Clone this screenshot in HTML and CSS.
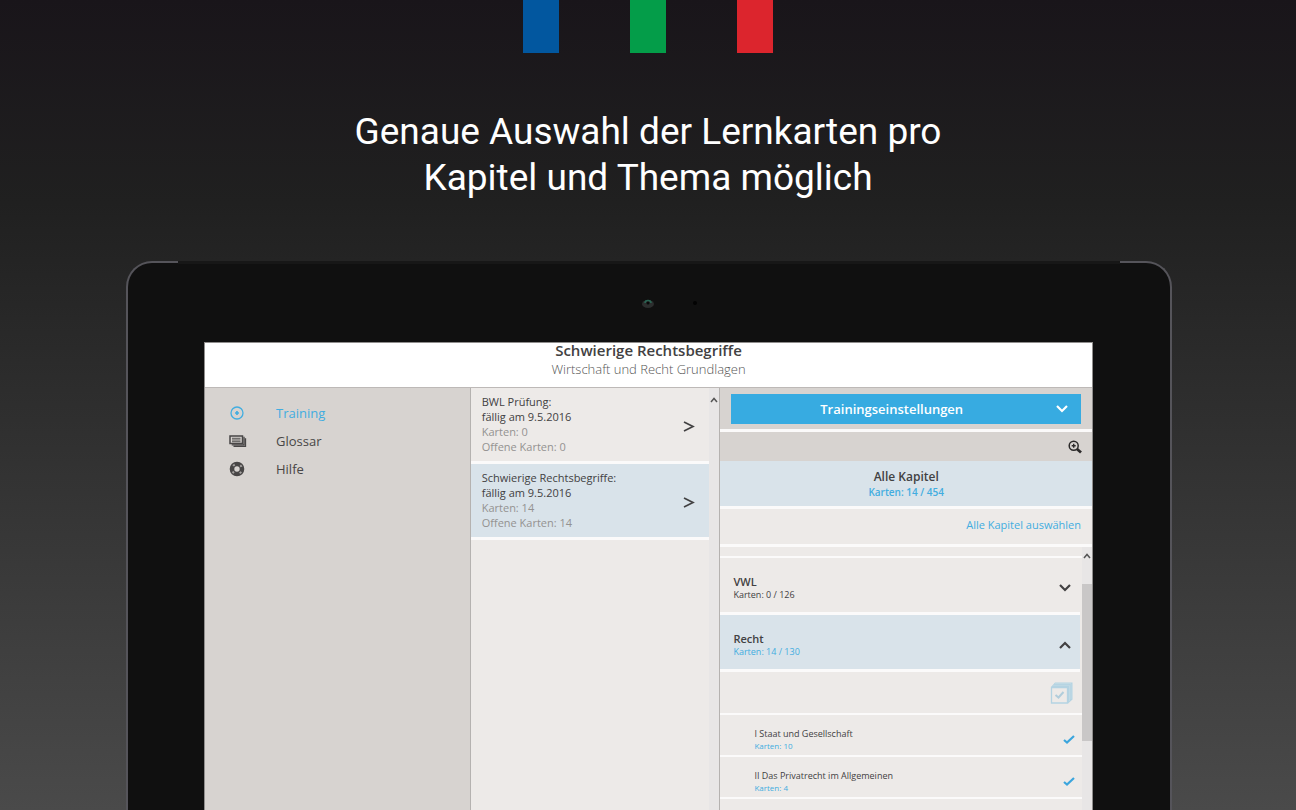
FILE: index.html
```
<!DOCTYPE html>
<html lang="de">
<head>
    <meta charset="UTF-8">
    <meta name="viewport" content="width=device-width, initial-scale=1.0">
    <title>Lernkarten</title>
    <link rel="stylesheet" href="styles.css">
</head>
<body>
    <div class="ribbons">
        <span class="ribbon blue"></span>
        <span class="ribbon green"></span>
        <span class="ribbon red"></span>
    </div>

    <h1>Genaue Auswahl der Lernkarten pro<br>Kapitel und Thema möglich</h1>

    <div class="tablet">
        <div class="bezel">
            <svg class="camera" width="60" height="12" viewBox="0 0 60 12">
                <ellipse cx="7" cy="6" rx="6" ry="4" fill="#2c2e2e"/>
                <path d="M4 5a3 2.500 0 0 1 6 0" fill="none" stroke="#2a6453" stroke-width="1.500"/>
                <circle cx="7" cy="5" r="1.500" fill="#090909"/>
                <circle cx="54" cy="5" r="2" fill="#030303"/>
            </svg>
        </div>

        <div class="screen">
            <header class="app-header">
                <h2>Schwierige Rechtsbegriffe</h2>
                <p>Wirtschaft und Recht Grundlagen</p>
            </header>

            <div class="columns">
                <nav class="sidebar">
                    <a href="#" class="nav-item active">
                        <svg width="18" height="16" viewBox="0 0 18 16"><circle cx="8" cy="8" r="6" fill="none" stroke="currentColor" stroke-width="1.300"/><path d="M8 6v4M6 8h4" stroke="currentColor" stroke-width="1.700"/></svg>
                        Training
                    </a>
                    <a href="#" class="nav-item">
                        <svg width="18" height="16" viewBox="0 0 18 16"><path d="M4.500 13.300h12v-8M2.700 11.800h12.300v-8" fill="none" stroke="currentColor" stroke-width="1.300"/><path d="M1 3h12.500v7.500H1z" fill="none" stroke="currentColor" stroke-width="1.500"/><path d="M3 5.300h8.500M3 7h8.500M3 8.700h8.500" stroke="currentColor" stroke-width=".9"/></svg>
                        Glossar
                    </a>
                    <a href="#" class="nav-item">
                        <svg width="18" height="16" viewBox="0 0 18 16"><circle cx="8" cy="8" r="5" fill="none" stroke="currentColor" stroke-width="4.600"/><circle cx="8" cy="8" r="5" fill="none" stroke="#a5a2a0" stroke-width="2" stroke-dasharray="2 5.854" stroke-dashoffset="-2.900"/></svg>
                        Hilfe
                    </a>
                </nav>

                <div class="trainings">
                    <div class="training-list">
                        <a href="#" class="training">
                            <div>
                                <p>BWL Prüfung:</p>
                                <p>fällig am 9.5.2016</p>
                                <p class="muted">Karten: 0</p>
                                <p class="muted">Offene Karten: 0</p>
                            </div>
                            <svg width="12" height="16" viewBox="0 0 12 16"><path d="M1 6l9 4.500L1 15" fill="none" stroke="currentColor" stroke-width="1.700"/></svg>
                        </a>
                        <a href="#" class="training selected">
                            <div>
                                <p>Schwierige Rechtsbegriffe:</p>
                                <p>fällig am 9.5.2016</p>
                                <p class="muted">Karten: 14</p>
                                <p class="muted">Offene Karten: 14</p>
                            </div>
                            <svg width="12" height="16" viewBox="0 0 12 16"><path d="M1 6l9 4.500L1 15" fill="none" stroke="currentColor" stroke-width="1.700"/></svg>
                        </a>
                    </div>
                    <div class="scrollbar">
                        <svg width="8" height="6" viewBox="0 0 8 6"><path d="M1 5l3-3.500L7 5" fill="none" stroke="currentColor" stroke-width="1.500"/></svg>
                    </div>
                </div>

                <main class="panel">
                    <div class="settings">
                        <button class="settings-btn">
                            <span>Trainingseinstellungen</span>
                            <svg width="14" height="10" viewBox="0 0 14 10"><path d="M2 2l5 5 5-5" fill="none" stroke="currentColor" stroke-width="2.200"/></svg>
                        </button>
                    </div>
                    <div class="search">
                        <button class="search-btn" aria-label="Suchen">
                            <svg width="14" height="14" viewBox="0 0 14 14"><circle cx="5.700" cy="5.700" r="4.500" fill="none" stroke="currentColor" stroke-width="1.500"/><path d="M5.700 3.700v4M3.700 5.700h4" stroke="currentColor" stroke-width="1.400"/><path d="M9 9l4 3.500" stroke="currentColor" stroke-width="2.800"/></svg>
                        </button>
                    </div>
                    <div class="all-chapters">
                        <h3>Alle Kapitel</h3>
                        <p>Karten: 14 / 454</p>
                    </div>
                    <div class="select-all"><a href="#">Alle Kapitel auswählen</a></div>

                    <div class="chapter-area">
                        <div class="chapter-list">
                            <div class="spacer"></div>
                            <a href="#" class="chapter">
                                <div>
                                    <h4>VWL</h4>
                                    <p>Karten: 0 / 126</p>
                                </div>
                                <svg width="14" height="10" viewBox="0 0 14 10"><path d="M2 2l5 5 5-5" fill="none" stroke="currentColor" stroke-width="2.200"/></svg>
                            </a>
                            <a href="#" class="chapter selected">
                                <div>
                                    <h4>Recht</h4>
                                    <p>Karten: 14 / 130</p>
                                </div>
                                <svg width="14" height="10" viewBox="0 0 14 10"><path d="M2 8l5-5 5 5" fill="none" stroke="currentColor" stroke-width="2.200"/></svg>
                            </a>
                            <div class="toggle-topics">
                                <button aria-label="Alle Themen auswählen">
                                    <svg width="24" height="24" viewBox="0 0 24 24"><path d="M1 6l4-4.500h17.500v17L18 22.500V6z" fill="#b4d3e2"/><path d="M1.500 6.500h16v15.500h-16z" fill="#edeae8" stroke="#b4d3e2" stroke-width="1.300"/><path d="M3 4.300h16.500V20M5 2.500h16v15.500" fill="none" stroke="#c5dce7" stroke-width=".7"/><path d="M5.500 14l3 2.500 5-5.500" fill="none" stroke="#b1cddb" stroke-width="2"/></svg>
                                </button>
                            </div>
                            <a href="#" class="topic">
                                <div>
                                    <h5>I Staat und Gesellschaft</h5>
                                    <p>Karten: 10</p>
                                </div>
                                <svg width="14" height="10" viewBox="0 0 14 10"><path d="M2 5l3 2.500 7-6.500" fill="none" stroke="currentColor" stroke-width="2.200"/></svg>
                            </a>
                            <a href="#" class="topic">
                                <div>
                                    <h5>II Das Privatrecht im Allgemeinen</h5>
                                    <p>Karten: 4</p>
                                </div>
                                <svg width="14" height="10" viewBox="0 0 14 10"><path d="M2 5l3 2.500 7-6.500" fill="none" stroke="currentColor" stroke-width="2.200"/></svg>
                            </a>
                        </div>
                        <div class="scrollbar">
                            <svg width="8" height="6" viewBox="0 0 8 6"><path d="M1 5l3-3.500L7 5" fill="none" stroke="currentColor" stroke-width="1.500"/></svg>
                            <div class="thumb"></div>
                        </div>
                    </div>
                </main>
            </div>
        </div>
    </div>
</body>
</html>
```
FILE: styles.css
```
* {
    box-sizing: border-box;
}
body {
    margin: 0;
    height: 100vh;
    overflow: hidden;
    display: flex;
    flex-direction: column;
    font-family: "Open Sans", "Noto Sans", sans-serif;
    color: #424142;
    background: linear-gradient(#19151a, #202020 25%, #4a4a4a);
}
h1, h2, h3, h4, h5, p {
    margin: 0;
}
a {
    color: inherit;
    text-decoration: none;
}
button {
    border: none;
    padding: 0;
    background: none;
    font-family: inherit;
    color: inherit;
    cursor: pointer;
}
svg {
    display: block;
    flex-shrink: 0;
}

/* top of the page */
.ribbons {
    display: flex;
    justify-content: center;
    gap: 71px;
}
.ribbon {
    width: 36px;
    height: 53px;
}
.blue {
    background: #02579f;
}
.green {
    background: #049d49;
}
.red {
    background: #dc252d;
}
h1 {
    margin: 56px 0 60px;
    font-family: Roboto, sans-serif;
    font-size: 37px;
    font-weight: 400;
    line-height: 46px;
    text-align: center;
    color: #fff;
}

/* tablet */
.tablet {
    position: relative;
    flex: 1;
    min-height: 0;
    margin: 0 124px 0 126px;
    display: flex;
    flex-direction: column;
    border: 2px solid #55545a;
    border-bottom: none;
    border-radius: 26px 26px 0 0;
    background: #101010;
}
/* darker strip between the two metal corners */
.tablet::before {
    content: "";
    position: absolute;
    top: -2px;
    left: 50px;
    right: 50px;
    height: 3px;
    background: #171717;
}
.bezel {
    display: flex;
    justify-content: center;
    height: 79px;
    padding: 35px 0 0 44px;
}
.screen {
    flex: 1;
    min-height: 0;
    margin: 0 77px 0 76px;
    display: flex;
    flex-direction: column;
    overflow: hidden;
    border: 1px solid #908e8d;
    border-bottom: none;
    background: #d7d3d0;
}
.app-header {
    height: 45px;
    border-bottom: 1px solid #bdb9b7;
    background: #fff;
    text-align: center;
}
.app-header h2 {
    font-size: 15px;
    font-weight: 600;
    line-height: 15px;
}
.app-header p {
    font-size: 13px;
    font-weight: 300;
    line-height: 22px;
    color: #555;
}
.columns {
    flex: 1;
    min-height: 0;
    display: grid;
    grid-template-columns: 266fr 250fr 372fr;
}

/* left navigation */
.sidebar {
    padding: 11px 24px;
    border-right: 1px solid #b5b2b0;
}
.nav-item {
    display: flex;
    align-items: center;
    gap: 29px;
    height: 28px;
    font-size: 13px;
    color: #484646;
}
.nav-item.active {
    color: #42ade0;
}

/* list of trainings */
.trainings {
    display: flex;
    border-right: 1px solid #b5b2b0;
    background: #edeae8;
}
.training-list {
    flex: 1;
}
.training {
    display: flex;
    align-items: center;
    justify-content: space-between;
    padding: 6px 14px 7px 11px;
    border-bottom: 3px solid #fbfafa;
    font-size: 11px;
    line-height: 15px;
}
.muted {
    color: #949291;
}
.selected {
    background: #d9e3ea;
}
.scrollbar {
    width: 10px;
    padding-top: 9px;
    background: #e8e6e6;
    color: #555;
}
.scrollbar svg {
    margin: 0 auto;
}

/* right panel */
.panel {
    min-width: 0;
    min-height: 0;
    display: flex;
    flex-direction: column;
    background: #edeae8;
}
.settings {
    padding: 6px 11px 5px;
    border-bottom: 3px solid #fbfafa;
    background: #d7d3d0;
}
.settings-btn {
    display: flex;
    align-items: center;
    gap: 3px;
    width: 100%;
    height: 30px;
    padding: 0 12px 0 0;
    background: #37abe1;
    color: #fff;
    font-size: 13px;
    font-weight: 600;
}
.settings-btn span {
    flex: 1;
}
.search {
    display: flex;
    align-items: center;
    justify-content: flex-end;
    height: 29px;
    padding-right: 10px;
    background: #d7d3d0;
    color: #2b2929;
}
.all-chapters {
    padding: 8px 0 7px;
    border-bottom: 3px solid #fbfafa;
    background: #d9e3ea;
    text-align: center;
}
.all-chapters h3 {
    font-size: 12px;
    font-weight: 600;
    line-height: 16px;
}
.all-chapters p {
    font-size: 10px;
    font-weight: 600;
    line-height: 14px;
    color: #42ade0;
}
.select-all {
    padding: 0 11px 3px 0;
    border-bottom: 3px solid #fbfafa;
    font-size: 11px;
    line-height: 32px;
    text-align: right;
    color: #42ade0;
}
.chapter-area {
    flex: 1;
    min-height: 0;
    display: flex;
    overflow: hidden;
}
.chapter-area .scrollbar {
    padding-top: 6px;
}
.chapter-list {
    flex: 1;
}
.spacer {
    height: 11px;
    border-bottom: 2px solid #fbfafa;
}
.chapter {
    display: flex;
    align-items: center;
    justify-content: space-between;
    height: 57px;
    margin-right: 2px;
    padding: 5px 8px 0 13px;
    border-bottom: 3px solid #fbfafa;
}
.chapter h4 {
    font-size: 11px;
    font-weight: 600;
    line-height: 13px;
}
.chapter p {
    font-size: 9px;
    line-height: 13px;
}
.topic p {
    font-size: 8px;
    line-height: 12px;
}
.chapter.selected p,
.topic p {
    color: #42ade0;
}
.toggle-topics {
    display: flex;
    align-items: center;
    justify-content: flex-end;
    height: 43px;
    padding-right: 8px;
    border-bottom: 2px solid #fbfafa;
}
.topic {
    display: flex;
    align-items: center;
    justify-content: space-between;
    height: 42px;
    padding: 9px 6px 0 34px;
    border-bottom: 2px solid #fbfafa;
}
.topic h5 {
    font-size: 9px;
    font-weight: 400;
    line-height: 12px;
}
.topic svg {
    color: #3ba5dd;
}
.thumb {
    height: 157px;
    margin-top: 25px;
    background: #c9c7c7;
}
```
